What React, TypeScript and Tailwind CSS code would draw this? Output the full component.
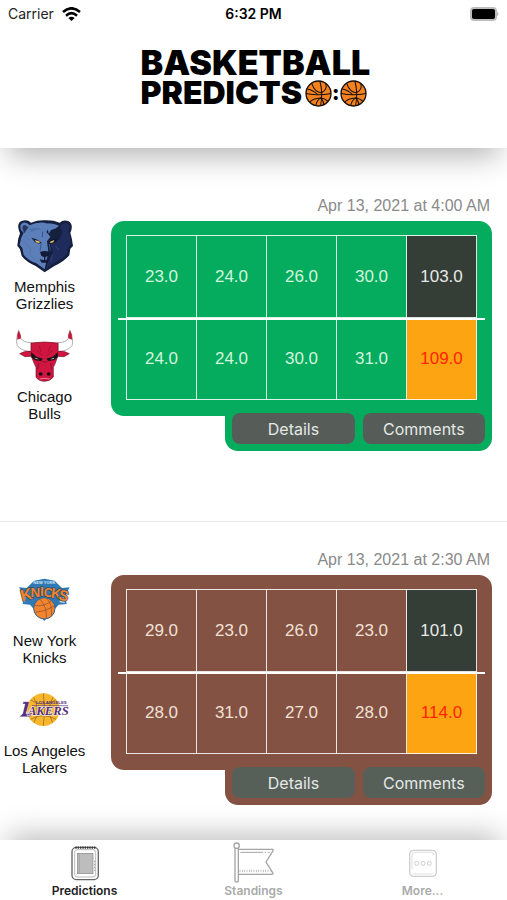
import React, { useState } from 'react';

interface Team {
  name: string[];
  logo: React.ReactNode;
  scores: string[];
}

interface Game {
  id: number;
  date: string;
  color: string;
  buttonColor: string;
  textColor: string;
  teams: Team[];
}

const Ball = () => (
  <svg width="27" height="27" viewBox="0 0 80 80" fill="none" stroke="#1a1008" strokeWidth="3" aria-hidden="true">
    <circle cx="40" cy="40" r="37" fill="#f58220" strokeWidth="4" />
    <path d="M3 40 Q40 48 77 40" />
    <path d="M44 3 Q54 38 46 77" />
    <path d="M20 10 Q28 36 49 38 Q66 30 62 11" />
    <path d="M7 27 Q24 30 38 44" />
    <path d="M14 66 Q22 54 47 53 Q60 54 68 64" />
    <path d="M32 76 Q34 62 46 53 Q56 62 56 74" />
  </svg>
);

const GrizzliesLogo = () => (
  <svg width="58" height="54" viewBox="45 27 174 162" aria-hidden="true">
    <path
      d="M54 62 Q46 38 64 32 Q80 28 90 38 Q110 30 132 31 Q156 30 176 38 Q188 27 203 34 Q219 44 208 68 Q214 88 216 108 L208 116 L205 136 Q188 156 160 168 L131 187 L104 168 Q76 156 62 138 L57 118 L49 107 Q50 86 57 70 Z"
      fill="#15203f"
    />
    <path
      d="M60 60 Q54 42 67 38 Q78 36 86 46 Q106 36 130 38 L150 44 L136 66 L148 80 L138 94 L142 126 L131 178 L106 160 Q80 150 68 134 L64 114 L56 104 Q58 84 68 68 Z"
      fill="#5d7fb9"
    />
    <path d="M176 48 Q190 34 203 42 Q210 50 202 64 Q212 90 208 106 L201 112 L198 132 Q184 148 158 160 L136 177 L142 150 L156 128 L148 100 L176 86 L184 66 Z" fill="#1f2b5b" />
    <path d="M139 40 Q160 40 174 48 L162 56 L150 60 L143 72 L140 55 Z" fill="#5d7fb9" />
    <path d="M66 60 Q60 46 72 45 L82 52 L70 70 Z" fill="#26365f" />
    <path d="M84 58 Q104 46 123 60 L108 59 L91 66 Z" fill="#4f70aa" />
    <path d="M91 83 L106 88 L122 98 L116 101 L102 97 Z" fill="#14203d" />
    <path d="M142 98 L156 88 L174 83 L165 97 L150 101 Z" fill="#0f1836" />
    <path d="M102 90 L117 95 L115 99 L105 97 Z M146 96 L160 90 L157 97 L149 99 Z" fill="#f4c95b" />
    <path d="M117 126 Q131 120 145 126 L141 138 L133 141 L133 151 L145 147 L140 158 L122 158 L116 148 L129 151 L129 141 L121 138 Z" fill="#111a36" />
    <path d="M121 101 L117 122 M125 64 L124 81 M145 102 L148 122" stroke="#34548c" strokeWidth="3" fill="none" />
    <path d="M68 94 L88 116 L86 133 L102 150 M76 78 L85 91" stroke="#4f70aa" strokeWidth="2" fill="none" />
    <path d="M164 108 L174 120 M154 135 L150 154" stroke="#3a5186" strokeWidth="2" fill="none" />
  </svg>
);

const BullsLogo = () => (
  <svg width="58" height="54" viewBox="46 30 174 162" aria-hidden="true">
    <path d="M54 34 Q60 48 61 58 Q66 70 92 71 L92 98 Q62 96 50 80 Q44 62 54 34 Z" fill="#fff" stroke="#8b8588" strokeWidth="2" />
    <path d="M208 34 Q202 48 203 58 Q198 70 172 71 L172 98 Q202 96 214 80 Q220 62 208 34 Z" fill="#fff" stroke="#8b8588" strokeWidth="2" />
    <path d="M54 34 Q61 48 61 58 L50 62 Q48 48 54 34 Z M208 34 Q201 48 203 58 L214 62 Q216 48 208 34 Z" fill="#c3193d" />
    <path
      d="M91 72 Q132 66 172 72 L172 97 Q190 94 206 104 L190 113 L171 112 L164 132 L158 145 L158 174 Q150 186 132 187 Q112 186 106 174 L106 145 L100 132 L92 112 L73 113 L57 104 Q74 94 91 97 Z"
      fill="#cf1540"
      stroke="#7a1029"
      strokeWidth="2"
    />
    <path d="M91 99 L107 113 L127 119 L121 126 L103 124 L92 115 Z M172 99 L156 113 L137 119 L143 126 L160 124 L171 115 Z" fill="#1b1114" />
    <path d="M101 116 L116 121 L106 120 Z M162 116 L148 121 L158 120 Z" fill="#fff" />
    <path d="M115 80 L121 98 M149 80 L143 98 M110 94 L126 111 M154 94 L138 111" stroke="#a8122f" strokeWidth="3" />
    <path d="M114 132 L111 151 M150 132 L153 151 M122 126 L132 130 L142 126" stroke="#8e1230" strokeWidth="3" fill="none" />
    <ellipse cx="120" cy="165" rx="6" ry="5" fill="#1b1114" />
    <ellipse cx="144" cy="165" rx="6" ry="5" fill="#1b1114" />
    <path d="M117 180 Q132 176 147 180" stroke="#f0b8c4" strokeWidth="2" fill="none" />
  </svg>
);

const KnicksLogo = () => (
  <svg width="54" height="54" viewBox="52 13 162 162" aria-hidden="true">
    <path d="M55 56 L78 58 L100 36 L131 30 L162 36 L184 58 L207 56 L194 82 L198 106 L174 108 L131 157 L88 108 L66 106 L70 82 Z" fill="#2f79b5" />
    <path d="M66 80 L76 79 L74 99 L69 99 Z M180 88 L194 86 L192 103 L176 101 Z" fill="#c4d3df" />
    <text x="131" y="47" textAnchor="middle" fontFamily="Liberation Sans" fontWeight="700" fontSize="12" fill="#d5e5f2">
      NEW YORK
    </text>
    <g fontFamily="Liberation Sans" fontWeight="700" textAnchor="middle" fill="#f1842d" stroke="#394b5c" strokeWidth="4" paintOrder="stroke">
      <text x="77" y="94" fontSize="48" transform="rotate(-14 77 78)">K</text>
      <text x="104" y="86" fontSize="40">N</text>
      <text x="124" y="83" fontSize="38">I</text>
      <text x="143" y="84" fontSize="38">C</text>
      <text x="167" y="89" fontSize="42" transform="rotate(8 167 74)">K</text>
      <text x="190" y="96" fontSize="44" transform="rotate(14 190 78)">S</text>
    </g>
    <circle cx="131" cy="119" r="32" fill="#f1842d" stroke="#2f6597" strokeWidth="3" />
    <path d="M102 110 Q128 116 152 97 M102 131 Q134 130 161 112 M117 91 Q140 115 137 150 M139 89 Q157 112 152 141" stroke="#874d33" strokeWidth="2" fill="none" />
  </svg>
);

const LakersLogo = () => (
  <svg width="54" height="54" viewBox="56 17 162 162" aria-hidden="true">
    <circle cx="132" cy="97" r="49" fill="#f8b62d" />
    <path d="M132 48 Q140 98 132 145 M103 60 Q124 97 104 136 M161 60 Q139 97 160 136 M94 68 Q132 92 170 68 M94 126 Q132 104 170 126" stroke="#8a6420" strokeWidth="2" fill="none" />
    <text x="156" y="79" textAnchor="middle" fontFamily="Liberation Sans" fontWeight="700" fontSize="13" fill="#56307e">
      LOS ANGELES
    </text>
    <path d="M72 73 H90 L80 109 L100 106 L92 118 H60 L70 109 L77 80 L70 80 Z" fill="#56307e" stroke="#fff" strokeWidth="1" />
    <text x="147" y="112" textAnchor="middle" fontFamily="Liberation Serif" fontStyle="italic" fontWeight="700" fontSize="38" fill="#56307e" stroke="#fff" strokeWidth="3" paintOrder="stroke">
      AKERS
    </text>
    <path d="M98 85 H206" stroke="#56307e" strokeWidth="2" />
  </svg>
);

const games: Game[] = [
  {
    id: 1,
    date: 'Apr 13, 2021 at 4:00 AM',
    color: 'bg-[#05ac5d]',
    buttonColor: 'bg-[#565d58]',
    textColor: 'text-[#d2f5df]',
    teams: [
      { name: ['Memphis', 'Grizzlies'], logo: <GrizzliesLogo />, scores: ['23.0', '24.0', '26.0', '30.0', '103.0'] },
      { name: ['Chicago', 'Bulls'], logo: <BullsLogo />, scores: ['24.0', '24.0', '30.0', '31.0', '109.0'] },
    ],
  },
  {
    id: 2,
    date: 'Apr 13, 2021 at 2:30 AM',
    color: 'bg-[#845243]',
    buttonColor: 'bg-[#566059]',
    textColor: 'text-[#f1e1d6]',
    teams: [
      { name: ['New York', 'Knicks'], logo: <KnicksLogo />, scores: ['29.0', '23.0', '26.0', '23.0', '101.0'] },
      { name: ['Los Angeles', 'Lakers'], logo: <LakersLogo />, scores: ['28.0', '31.0', '27.0', '28.0', '114.0'] },
    ],
  },
];

const StatusBar = () => (
  <div className="grid h-7 grid-cols-3 items-center px-2 font-[Inter,sans-serif] text-sm text-[#222]">
    <div className="flex items-center gap-2">
      <span>Carrier</span>
      <svg width="19" height="14" viewBox="0 0 57 42" fill="none" stroke="#000" strokeWidth="8" aria-hidden="true">
        <path d="M3 15 Q28.500 -7 54 15" />
        <path d="M12 26 Q28.500 11 45 26" />
        <path d="M28.500 42 L19 33 Q28.500 25 38 33 Z" fill="#000" stroke="none" />
      </svg>
    </div>
    <span className="text-center font-semibold text-black">6:32 PM</span>
    <svg className="justify-self-end" width="30" height="14" viewBox="0 0 30 14" aria-hidden="true">
      <rect x="1" y="0" width="27" height="14" rx="4" fill="#bdbdbd" />
      <rect x="3" y="2" width="23" height="10" rx="2" fill="#000" />
      <path d="M28 4.500 Q31 7 28 9.500 Z" fill="#bdbdbd" />
    </svg>
  </div>
);

const Header = () => (
  <header className="relative z-10 h-[148px] shrink-0 bg-white shadow-[0_16px_28px_-8px_rgba(0,0,0,0.3)]">
    <StatusBar />
    <h1 className="mx-auto mt-5 w-[226px] font-[Inter,sans-serif] leading-[30px] font-black text-black">
      <span className="block text-[34px]">BASKETBALL</span>
      <span className="flex items-center justify-between text-[32px]">
        PREDICTS
        <span className="flex items-center">
          <Ball />
          <span className="text-xl leading-none">:</span>
          <Ball />
        </span>
      </span>
    </h1>
  </header>
);

const ScoreTable = ({ game }: { game: Game }) => (
  <div className="relative">
    <table className={`w-full table-fixed border-collapse text-center text-[17px] ${game.textColor}`}>
      <tbody>
        {game.teams.map((team, row) => (
          <tr key={row} className="h-[82px]">
            {team.scores.map((score, i) => {
              let total = '';
              if (i === 4) total = row === 0 ? 'bg-[#343d36] text-[#e6e9e6]' : 'bg-[#fda412] text-[#ff2400]';
              return (
                <td key={i} className={`border border-white/85 ${total}`}>{score}</td>
              );
            })}
          </tr>
        ))}
      </tbody>
    </table>
    {/* line between the teams sticks out of the table on both sides */}
    <div className="absolute -inset-x-2 top-1/2 h-0.5 bg-white" />
  </div>
);

const GameItem = ({ game }: { game: Game }) => (
  <article className="flex border-b border-[#e8e8e8] pt-[26px] pb-[70px]">
    <div className="mt-6 flex w-[89px] shrink-0 flex-col gap-4">
      {game.teams.map((team) => (
        <div key={team.name[0]} className="flex flex-col items-center gap-1 text-center text-[15px] leading-[17px] text-[#111]">
          <div className="flex h-14 items-center">{team.logo}</div>
          <p>
            {team.name[0]}
            <br />
            {team.name[1]}
          </p>
        </div>
      ))}
    </div>
    <div className="mr-[15px] ml-[22px] flex-1">
      <p className="mb-[3px] pr-0.5 text-right text-base leading-6 text-[#8a8a8a]">{game.date}</p>
      <div className={`rounded-[13px] px-[15px] py-[14px] pb-4 ${game.color}`}>
        <ScoreTable game={game} />
      </div>
      <div className={`relative -mt-4 ml-auto flex w-[70%] gap-2 rounded-b-[13px] px-[7px] pt-[13px] pb-[7px] ${game.color}`}>
        <button className={`h-[31px] flex-1 rounded-lg font-[Inter,sans-serif] text-base text-[#e5e8e6] ${game.buttonColor}`}>Details</button>
        <button className={`h-[31px] flex-1 rounded-lg font-[Inter,sans-serif] text-base text-[#e5e8e6] ${game.buttonColor}`}>Comments</button>
      </div>
    </div>
  </article>
);

const PredictionsIcon = () => (
  <svg width="42" height="43" viewBox="0 0 126 129" fill="none" stroke="#666" strokeWidth="4" aria-hidden="true">
    <rect x="24" y="22" width="79" height="97" rx="13" />
    <rect x="32" y="29" width="63" height="82" rx="8" stroke="#999" strokeWidth="2" />
    <rect x="40" y="40" width="47" height="61" fill="#bdbdbd" stroke="#888" strokeWidth="2" />
    <path d="M34 23 H94" stroke="#333" strokeWidth="7" strokeDasharray="4 3" />
    <path d="M46 42 V100" stroke="#999" strokeWidth="2" />
    <path d="M92 62 V92" stroke="#aaa" strokeDasharray="5 4" />
  </svg>
);

const StandingsIcon = () => (
  <svg width="42" height="43" viewBox="0 0 126 129" fill="none" stroke="#a5a5a5" strokeWidth="4" aria-hidden="true">
    <circle cx="11" cy="17" r="8" />
    <path d="M6 25 V123 Q11 130 16 123 V25" />
    <path d="M16 28 H119 Q122 30 119 34 L99 66 L119 98 Q122 103 116 103 H16" />
    <path d="M22 37 H90 M95 37 H99 M104 37 H110" strokeWidth="3" />
    <path d="M20 93 H112" strokeWidth="7" strokeDasharray="2 5" />
  </svg>
);

const MoreIcon = () => (
  <svg width="42" height="43" viewBox="0 0 126 129" fill="none" stroke="#cfcfcf" strokeWidth="3" aria-hidden="true">
    <rect x="23" y="31" width="80" height="78" rx="12" strokeWidth="4" />
    <path d="M30 89 V45 Q30 37 38 37 H88 Q96 37 96 45" strokeWidth="2" />
    <path d="M34 102 H92" strokeWidth="2" />
    <circle cx="44" cy="70" r="6" />
    <circle cx="63" cy="70" r="6" />
    <circle cx="82" cy="70" r="6" />
  </svg>
);

const tabs = [
  { label: 'Predictions', icon: <PredictionsIcon /> },
  { label: 'Standings', icon: <StandingsIcon /> },
  { label: 'More...', icon: <MoreIcon /> },
];

const App = () => {
  const [active, setActive] = useState('Predictions');

  return (
    <div className="flex h-screen flex-col bg-white font-['Liberation_Sans',Arial,sans-serif]">
      <Header />
      <main className="min-h-0 flex-1 overflow-y-auto pt-5 [scrollbar-width:none]">
        {games.map((game) => (
          <GameItem key={game.id} game={game} />
        ))}
      </main>
      <nav className="relative z-10 grid h-[60px] shrink-0 grid-cols-3 bg-white shadow-[0_-14px_28px_-8px_rgba(0,0,0,0.25)]">
        {tabs.map((tab) => (
          <button
            key={tab.label}
            onClick={() => setActive(tab.label)}
            className={`flex flex-col items-center font-[Inter,sans-serif] text-xs leading-4 font-semibold ${active === tab.label ? 'text-[#222]' : 'text-[#aaa]'}`}
          >
            {tab.icon}
            {tab.label}
          </button>
        ))}
      </nav>
    </div>
  );
};

export default App;
